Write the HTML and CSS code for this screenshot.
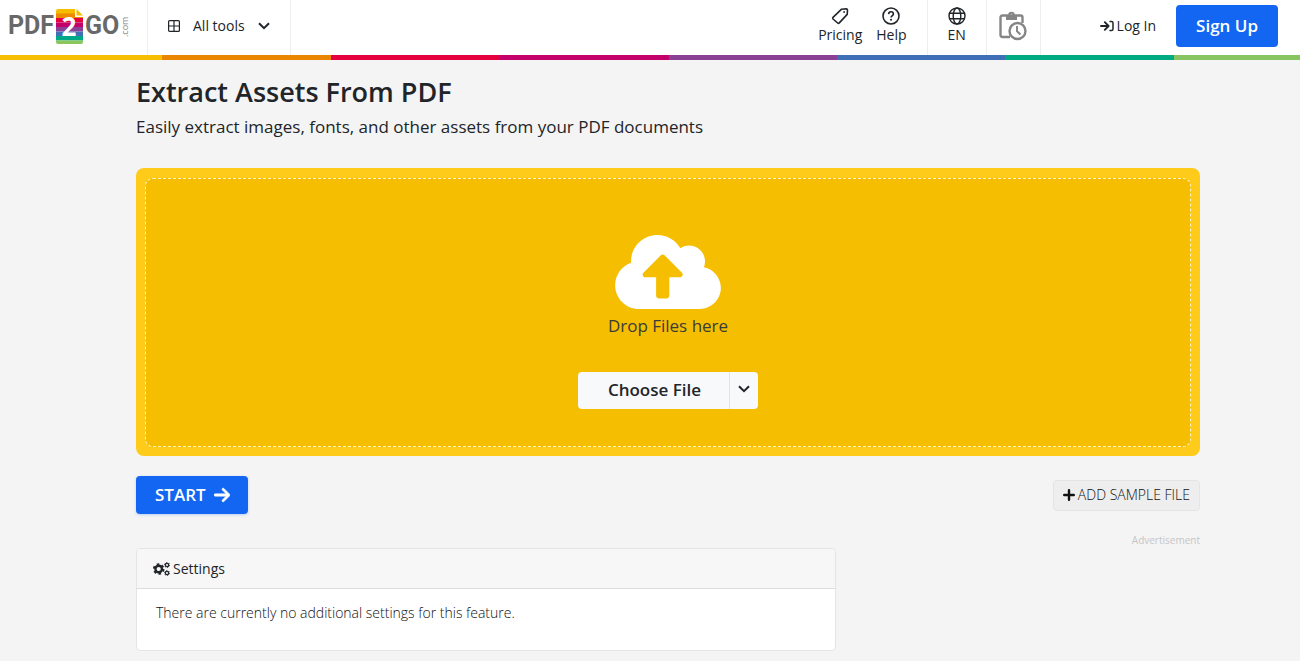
FILE: index.html
```html
<!DOCTYPE html>
<html lang="en">
<head>
<meta charset="utf-8">
<meta name="viewport" content="width=device-width, initial-scale=1">
<title>Extract Assets From PDF</title>
<link rel="stylesheet" href="styles.css">
</head>
<body>
<header class="topbar">
  <a class="logo" href="#" aria-label="PDF2GO.com">
    <span class="logo-word">PDF</span>
    <svg class="logo-page" width="27" height="35" viewBox="0 0 27 35">
      <path fill="#f6bd00" d="M2 0h17v5H0V2q0-2 2-2zM20.500 0L27 6.500h-6.500z"/>
      <path fill="#ee8a00" d="M0 4.500h19v3.500h8v1H0z"/>
      <path fill="#e5003f" d="M0 9h27v4.500H0z"/>
      <path fill="#c1006a" d="M0 13.500h27V18H0z"/>
      <path fill="#8c4196" d="M0 18h27v4.500H0z"/>
      <path fill="#4270b4" d="M0 22.500h27V27H0z"/>
      <path fill="#00a986" d="M0 27h27v4.500H0z"/>
      <path fill="#8ac65b" d="M0 31.500h27V33q0 2-2 2H2q-2 0-2-2z"/>
      <text class="logo-two" x="13" y="27" text-anchor="middle">2</text>
    </svg>
    <span class="logo-word">GO</span>
    <span class="logo-com">.com</span>
  </a>
  <button class="all-tools" type="button">
    <svg width="12" height="12" viewBox="0 0 12 12" fill="none" stroke="currentColor"><rect x=".6" y=".6" width="10.8" height="10.8" rx="1" stroke-width="1.2"/><path d="M6 .6v10.8M.6 6h10.8" stroke-width="1.2"/></svg>
    <span>All tools</span>
    <svg width="12" height="8" viewBox="0 0 12 8" fill="none" stroke="currentColor" stroke-width="2"><path d="M1 1.200l5 5 5-5"/></svg>
  </button>
  <nav class="nav">
    <a class="nav-link" href="#">
      <svg width="18" height="18" viewBox="0 0 18 18" fill="none" stroke="currentColor" stroke-width="1.6" stroke-linejoin="round"><path d="M10.600 2.200l4.600-.4q1.200 0 1.300 1.200l-.3 4.400-7.900 8.500q-.8.800-1.600.1L2 12q-.7-.8 0-1.600z"/><circle cx="13.100" cy="5" r=".9" fill="currentColor" stroke="none"/></svg>
      <span>Pricing</span>
    </a>
    <a class="nav-link" href="#">
      <svg width="18" height="18" viewBox="0 0 18 18" fill="none" stroke="currentColor" stroke-width="1.6"><circle cx="9" cy="9" r="8"/><path d="M6.600 7.100c.1-1.500 1.100-2.300 2.400-2.300s2.400.8 2.400 2.100c0 1.600-2.300 1.700-2.300 3.500"/><circle cx="9.050" cy="12.800" r="1.050" fill="currentColor" stroke="none"/></svg>
      <span>Help</span>
    </a>
  </nav>
  <button class="nav-link language" type="button">
    <svg width="18" height="18" viewBox="0 0 18 18" fill="none" stroke="currentColor" stroke-width="1.4"><circle cx="9" cy="9" r="8"/><ellipse cx="9" cy="9" rx="3.800" ry="8"/><path d="M1.500 6.200h15M1.500 11.800h15"/></svg>
    <span>EN</span>
  </button>
  <button class="history" type="button" aria-label="File history">
    <svg width="28" height="30" viewBox="0 0 28 30" fill="none" stroke="currentColor" stroke-width="2.400"><path d="M11 26H3.500Q1.500 26 1.500 24V6.500q0-2 2-2h18q2 0 2 2V12"/><path d="M7 4v5h11V4" fill="currentColor" stroke="none"/><circle cx="12.500" cy="4" r="2.300" stroke-width="2"/><circle cx="18.500" cy="20" r="8" fill="#fff"/><path d="M18 15v5.300l3.500 3.200" stroke-width="1.900"/></svg>
  </button>
  <div class="account">
    <a class="login" href="#">
      <svg width="14" height="12" viewBox="0 0 14 12" fill="none" stroke="currentColor" stroke-width="1.900" stroke-linecap="round" stroke-linejoin="round"><path d="M1 6h7M4.800 2.200L8.600 6 4.800 9.800"/><path d="M10 1.500h1.500q1.500 0 1.500 1.500v6q0 1.500-1.500 1.500H10" stroke-width="1.500"/></svg>
      <span>Log In</span>
    </a>
    <a class="signup" href="#">Sign Up</a>
  </div>
</header>
<div class="rainbow"></div>
<main class="page">
  <h1 class="title">Extract Assets From PDF</h1>
  <p class="subtitle">Easily extract images, fonts, and other assets from your PDF documents</p>
  <section class="uploader">
    <div class="drop-area">
      <svg class="cloud" width="106" height="74" viewBox="0 32 640 448" fill="#fff"><path d="M537.600 226.600c4.100-10.700 6.400-22.400 6.400-34.600 0-53-43-96-96-96-19.700 0-38.100 6-53.300 16.200C367 64.200 315.300 32 256 32c-88.400 0-160 71.600-160 160 0 2.700.1 5.400.2 8.100C40.200 219.800 0 273.200 0 336c0 79.500 64.500 144 144 144h368c70.700 0 128-57.300 128-128 0-61.900-44-113.600-102.400-125.400zM393.400 288H328v112c0 8.800-7.200 16-16 16h-48c-8.800 0-16-7.200-16-16V288h-65.400c-14.300 0-21.400-17.200-11.300-27.300l105.400-105.400c6.200-6.200 16.400-6.200 22.600 0l105.400 105.400c10.100 10.100 2.900 27.300-11.300 27.300z"/></svg>
      <p class="drop-text">Drop Files here</p>
      <div class="choose">
        <button class="choose-file" type="button">Choose File</button>
        <button class="choose-more" type="button" aria-label="More sources">
          <svg width="12" height="8" viewBox="0 0 12 8" fill="none" stroke="currentColor" stroke-width="2"><path d="M1 1.200l5 5 5-5"/></svg>
        </button>
      </div>
    </div>
  </section>
  <div class="actions">
    <button class="start" type="button">
      <span>START</span>
      <svg width="16" height="18" viewBox="0 32 448 448" fill="currentColor" stroke="currentColor" stroke-width="16"><path d="M438.600 278.600c12.500-12.500 12.500-32.800 0-45.300l-160-160c-12.500-12.500-32.800-12.500-45.300 0s-12.500 32.800 0 45.300L338.800 224H32c-17.700 0-32 14.300-32 32s14.300 32 32 32h306.700L233.400 393.400c-12.500 12.500-12.500 32.800 0 45.300s32.800 12.500 45.300 0l160-160z"/></svg>
    </button>
    <button class="sample" type="button">
      <svg width="12" height="12" viewBox="0 0 12 12" fill="none" stroke="currentColor" stroke-width="2.400" stroke-linecap="round"><path d="M6 1.200v9.600M1.200 6h9.600"/></svg>
      <span>ADD SAMPLE FILE</span>
    </button>
  </div>
  <div class="lower">
    <section class="settings">
      <h2 class="settings-head">
        <svg width="17" height="14" viewBox="0 0 17 14" fill="none" stroke="currentColor"><circle cx="5.700" cy="7" r="3.300" stroke-width="2.400"/><circle cx="5.700" cy="7" r="4.900" stroke-width="1.800" stroke-dasharray="2.560 2.570"/><circle cx="14" cy="3" r="1.700" stroke-width="1.300"/><circle cx="14" cy="3" r="2.600" stroke-width=".8" stroke-dasharray="1.360 1.360"/><circle cx="14" cy="11" r="1.700" stroke-width="1.300"/><circle cx="14" cy="11" r="2.600" stroke-width=".8" stroke-dasharray="1.360 1.360"/></svg>
        <span>Settings</span>
      </h2>
      <p class="settings-body">There are currently no additional settings for this feature.</p>
    </section>
    <p class="ad-label">Advertisement</p>
  </div>
</main>
</body>
</html>
```
FILE: styles.css
```css
* { box-sizing: border-box; }
body {
  margin: 0;
  background: #f4f4f4;
  color: #212529;
  font-family: "Open Sans", "Noto Sans", sans-serif;
  font-size: 14px;
  line-height: 20px;
}
h1, h2, p { margin: 0; }
a { color: inherit; text-decoration: none; }
button {
  border: 0;
  padding: 0;
  background: none;
  color: inherit;
  font: inherit;
  cursor: pointer;
}
svg { display: block; flex: none; }

.topbar {
  display: flex;
  align-items: stretch;
  height: 55px;
  background: #fff;
}
.logo {
  display: flex;
  align-items: center;
  width: 147px;
  height: 52px;
  padding-left: 8px;
  color: #686868;
}
.logo-word {
  width: 46px;
  font: 700 25px/36px Roboto, sans-serif;
}
.logo-page {
  margin: 0 2px;
  overflow: visible;
}
.logo-two {
  fill: #fff;
  font: 700 26px/28px "Open Sans", sans-serif;
}
.logo-com {
  height: 22px;
  margin-left: -11px;
  color: #888;
  font-size: 9px;
  line-height: 10px;
  writing-mode: vertical-rl;
  transform: rotate(180deg);
}
.all-tools {
  display: flex;
  align-items: center;
  gap: 13px;
  padding: 0 20px 4px;
  border: solid #eee;
  border-width: 0 1px;
}
.nav {
  display: flex;
  gap: 14px;
  margin-left: auto;
  padding-right: 20px;
}
.nav-link {
  display: flex;
  flex-direction: column;
  align-items: center;
  padding-top: 7px;
}
.language {
  width: 60px;
  border: solid #eee;
  border-width: 0 1px;
}
.history {
  display: flex;
  align-items: center;
  justify-content: center;
  width: 54px;
  padding-bottom: 4px;
  border-right: 1px solid #eee;
  color: #858585;
}
.account {
  display: flex;
  align-items: center;
  gap: 20px;
  padding: 0 22px 4px 59px;
}
.login {
  display: flex;
  align-items: center;
  gap: 3px;
}
.signup {
  padding: 8px 20px;
  border-radius: 4px;
  background: #1266f1;
  color: #fff;
  font-size: 17px;
  font-weight: 600;
  line-height: 26px;
}
.rainbow {
  height: 5px;
  background: linear-gradient(90deg, #f6c000 12.5%, #ea8500 12.5% 25.5%, #e6003e 25.5% 38.5%, #c4006a 38.5% 51.5%, #8a4095 51.5% 64.4%, #3f6fb6 64.4% 77.3%, #00aa82 77.3% 90.3%, #88c461 90.3%);
}

.page { padding: 13px 100px 10px 136px; }
.title {
  font-size: 27px;
  font-weight: 600;
  line-height: 38px;
}
.subtitle {
  margin-top: 3px;
  font-size: 17px;
  line-height: 26px;
}
.uploader {
  margin-top: 28px;
  padding: 10px 9px 9px;
  border-radius: 8px;
  background: #ffcb1a;
}
.drop-area {
  display: flex;
  flex-direction: column;
  align-items: center;
  padding: 56px 0 37px;
  border: 1px dashed #fff3c4;
  border-radius: 8px;
  background: #f6be00;
}
.drop-text {
  margin: 4px 0 33px;
  color: #3b3b3b;
  font-size: 17px;
  line-height: 26px;
}
.choose {
  display: flex;
  width: 180px;
  height: 37px;
  border-radius: 4px;
  background: #f8f9fb;
}
.choose-file {
  flex: 1;
  padding: 0 0 2px 2px;
  font-size: 17px;
  font-weight: 600;
}
.choose-more {
  display: flex;
  align-items: center;
  justify-content: center;
  width: 29px;
  padding-bottom: 3px;
  border-left: 1px solid #e2e4e6;
}
.actions {
  display: flex;
  align-items: center;
  justify-content: space-between;
  margin-top: 20px;
}
.start {
  display: flex;
  align-items: center;
  gap: 8px;
  height: 38px;
  padding: 0 18px 0 19px;
  border-radius: 4px;
  background: #1266f1;
  box-shadow: 0 1px 3px #1266f140;
  color: #fff;
  font-size: 17px;
  font-weight: 600;
}
.sample {
  display: flex;
  align-items: center;
  gap: 3px;
  height: 31px;
  padding: 0 9px;
  border: 1px solid #e2e4e6;
  border-radius: 4px;
  background: #eee;
  color: #111;
  font-weight: 300;
}
.lower {
  display: flex;
  align-items: flex-start;
  justify-content: space-between;
  padding-top: 16px;
}
.settings {
  width: 700px;
  margin-top: 18px;
  border: 1px solid #e2e4e6;
  border-radius: 4px;
  background: #fff;
  overflow: hidden;
}
.settings-head {
  display: flex;
  align-items: center;
  gap: 3px;
  height: 40px;
  padding: 0 16px;
  border-bottom: 1px solid #dedede;
  background: #f7f7f7;
  font-size: 14px;
  font-weight: 500;
}
.settings-body {
  padding: 14px 19px 27px;
  color: #111;
  font-weight: 300;
}
.ad-label {
  color: #c6c6c6;
  font-size: 10px;
  line-height: 20px;
}
```
